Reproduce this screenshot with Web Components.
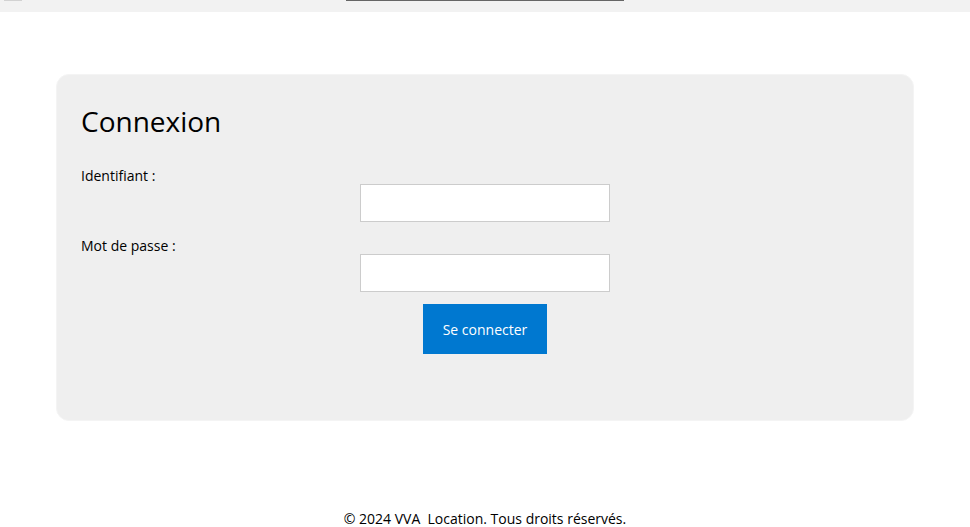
<!DOCTYPE html>
<html lang="fr">
<head>
<meta charset="utf-8">
<title>Connexion - VVA Location</title>
<style>
body { margin: 0; background: #fff; color: #000; font: 14px/16px "Segoe UI", "Open Sans", "Noto Sans", sans-serif; }
</style>
</head>
<body>
<vva-page>
  <vva-topbar slot="top"></vva-topbar>
  <vva-login-card heading="Connexion">
    <vva-field label="Identifiant :" type="text" name="username"></vva-field>
    <vva-field label="Mot de passe :" type="password" name="password"></vva-field>
    <vva-button>Se connecter</vva-button>
  </vva-login-card>
  <vva-footer slot="bottom">© 2024 VVA&nbsp; Location. Tous droits réservés.</vva-footer>
</vva-page>
<script>
class VvaElement extends HTMLElement {
  render(html) {
    if (!this.shadowRoot) this.attachShadow({ mode: "open" }).innerHTML = html;
  }
}

customElements.define("vva-page", class extends VvaElement {
  connectedCallback() {
    this.render(`<style>
      :host { display: flex; flex-direction: column; }
      main { padding: 62px 56px 90px; }
    </style>
    <slot name="top"></slot>
    <main><slot></slot></main>
    <slot name="bottom"></slot>`);
  }
});

customElements.define("vva-topbar", class extends VvaElement {
  connectedCallback() {
    this.render(`<style>
      :host { display: grid; grid-template-columns: 1fr 278px 1fr; height: 12px; background: #f2f2f2; }
      .menu { width: 18px; height: 1px; margin-left: 4px; background: #d2d2d2; }
      .search { height: 1px; background: #666; }
    </style>
    <div class="menu"></div><div class="search"></div>`);
  }
});

customElements.define("vva-login-card", class extends VvaElement {
  connectedCallback() {
    this.render(`<style>
      :host { display: block; padding: 24px 24px 66px; border: 1px solid #f4f4f4; border-radius: 13px; background: #efefef; }
      h1 { margin: 0 0 21px; font-size: 28px; line-height: 44px; font-weight: 400; }
      form { display: flex; flex-direction: column; gap: 12px; }
    </style>
    <h1>${this.getAttribute("heading")}</h1>
    <form><slot></slot></form>`);
  }
});

customElements.define("vva-field", class extends VvaElement {
  connectedCallback() {
    this.render(`<style>
      :host { display: flex; flex-direction: column; }
      label { align-self: flex-start; padding-top: 4px; }
      input { box-sizing: border-box; align-self: center; width: 250px; max-width: 100%; height: 38px; padding: 8px;
              border: 1px solid #ccc; border-radius: 0; background: #fff; font: inherit; }
    </style>
    <label for="control">${this.getAttribute("label")}</label>
    <input id="control" type="${this.getAttribute("type")}" name="${this.getAttribute("name")}">`);
  }
});

customElements.define("vva-button", class extends VvaElement {
  connectedCallback() {
    this.render(`<style>
      :host { display: flex; justify-content: center; }
      button { margin: 0; padding: 18px 20px 16px; border: 0; background: #0078d0; color: #fff; font: inherit; }
    </style>
    <button type="submit"><slot></slot></button>`);
  }
});

customElements.define("vva-footer", class extends VvaElement {
  connectedCallback() {
    this.render(`<style>
      :host { display: block; text-align: center; }
      p { margin: 0; }
    </style>
    <p><slot></slot></p>`);
  }
});
</script>
</body>
</html>
